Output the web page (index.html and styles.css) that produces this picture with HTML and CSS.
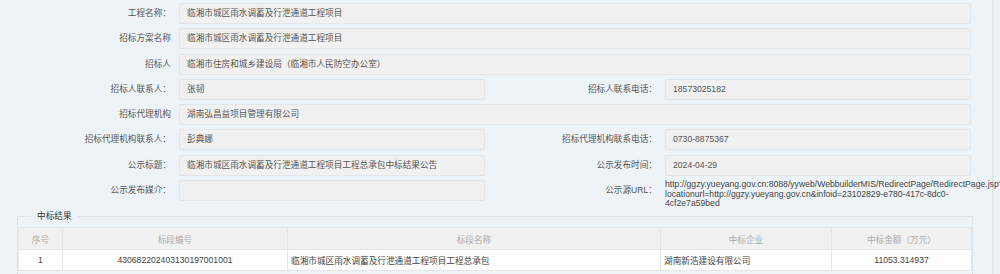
FILE: index.html
```html
<!DOCTYPE html>
<html lang="zh-CN">
<head>
    <meta charset="UTF-8">
    <meta name="viewport" content="width=device-width, initial-scale=1.0">
    <title>中标结果公示</title>
    <link rel="stylesheet" href="styles.css">
</head>
<body>
    <div class="page">
        <div class="info-grid">
            <label class="field-label">工程名称：</label>
            <div class="field-box span-3">临湘市城区雨水调蓄及行泄通道工程项目</div>

            <label class="field-label">招标方案名称</label>
            <div class="field-box span-3">临湘市城区雨水调蓄及行泄通道工程项目</div>

            <label class="field-label">招标人</label>
            <div class="field-box span-3">临湘市住房和城乡建设局（临湘市人民防空办公室）</div>

            <label class="field-label">招标人联系人：</label>
            <div class="field-box">张韧</div>
            <label class="field-label">招标人联系电话：</label>
            <div class="field-box">18573025182</div>

            <label class="field-label">招标代理机构</label>
            <div class="field-box span-3">湖南弘昌益项目管理有限公司</div>

            <label class="field-label">招标代理机构联系人：</label>
            <div class="field-box">彭典娜</div>
            <label class="field-label">招标代理机构联系电话：</label>
            <div class="field-box">0730-8875367</div>

            <label class="field-label">公示标题：</label>
            <div class="field-box">临湘市城区雨水调蓄及行泄通道工程项目工程总承包中标结果公告</div>
            <label class="field-label">公示发布时间：</label>
            <div class="field-box">2024-04-29</div>

            <label class="field-label">公示发布媒介：</label>
            <div class="field-box"></div>
            <label class="field-label">公示源URL：</label>
            <div class="field-url">http://ggzy.yueyang.gov.cn:8088/yyweb/WebbuilderMIS/RedirectPage/RedirectPage.jsp?locationurl=http://ggzy.yueyang.gov.cn&amp;infoid=23102829-e780-417c-8dc0-4cf2e7a59bed</div>
        </div>

        <fieldset class="result-set">
            <legend>中标结果</legend>
            <table class="result-table">
                <colgroup>
                    <col style="width: 44px">
                    <col style="width: 225px">
                    <col style="width: 373px">
                    <col style="width: 171px">
                    <col style="width: 140px">
                </colgroup>
                <thead>
                    <tr>
                        <th>序号</th>
                        <th>标段编号</th>
                        <th>标段名称</th>
                        <th>中标企业</th>
                        <th>中标金额（万元）</th>
                    </tr>
                </thead>
                <tbody>
                    <tr>
                        <td class="center">1</td>
                        <td class="center">430682202403130197001001</td>
                        <td>临湘市城区雨水调蓄及行泄通道工程项目工程总承包</td>
                        <td>湖南新浩建设有限公司</td>
                        <td class="center">11053.314937</td>
                    </tr>
                </tbody>
            </table>
        </fieldset>
    </div>
</body>
</html>
```

FILE: styles.css
```css
body {
    margin: 0;
    font-family: "Liberation Sans", "Noto Sans CJK SC", sans-serif;
    font-size: 8.64px;
    color: #555;
    background-color: #eef3f7;
    overflow: hidden;
}
.page {
    width: 994px;
    height: 274px;
    padding-top: 3px;
    box-sizing: border-box;
    border-right: 2px solid #e1e7ed;
}
.info-grid {
    display: grid;
    grid-template-columns: 171px 306px 164px 306px;
    column-gap: 8px;
    row-gap: 4.3px;
    align-items: start;
}
.field-label {
    line-height: 21px;
    text-align: right;
    color: #555;
    white-space: nowrap;
}
.field-box {
    height: 21px;
    line-height: 19px;
    padding: 0 7px;
    box-sizing: border-box;
    background-color: #f1f1f1;
    border: 1px solid #e4e6e8;
    border-radius: 2px;
    white-space: nowrap;
    overflow: hidden;
}
.span-3 {
    grid-column: span 3;
}
.field-url {
    line-height: 9.7px;
    color: #444;
    min-width: 0;
}
.result-set {
    margin: 0 0 0 17px;
    width: 954px;
    padding: 4px 0 10px;
    border: 1px solid #dfe4e9;
    box-sizing: border-box;
}
.result-set legend {
    margin-left: 13px;
    padding: 0 6px;
    line-height: 14px;
    color: #333;
}
.result-table {
    width: 953px;
    table-layout: fixed;
    border-collapse: collapse;
    background-color: #fff;
}
.result-table th {
    height: 21px;
    padding: 0 3px;
    font-weight: normal;
    color: #aaa;
    background-color: #f1f1f1;
    border: 1px solid #e6e6e6;
}
.result-table td {
    height: 20px;
    padding: 0 3px;
    color: #444;
    border: 1px solid #e6e6e6;
    white-space: nowrap;
}
.result-table td.center {
    text-align: center;
}
```
